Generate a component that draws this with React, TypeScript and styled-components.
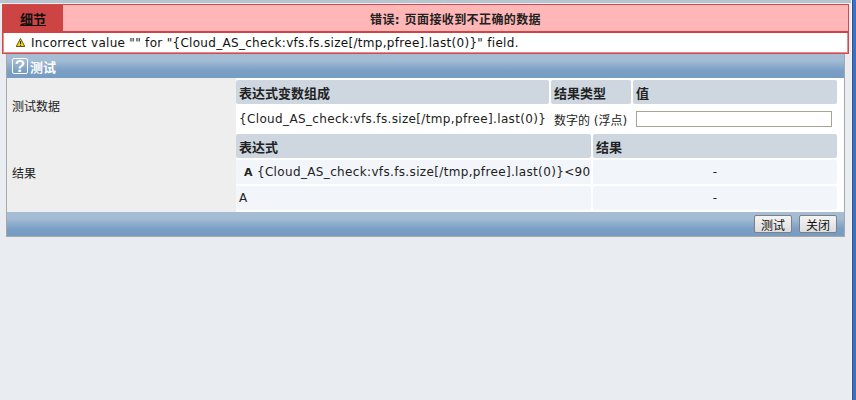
import React from 'react'
import styled, {createGlobalStyle} from 'styled-components'

const GlobalStyle = createGlobalStyle`
  html, body {
    margin: 0;
    padding: 0;
    height: 100%;
    background-color: #e9edf2;
    overflow: hidden;
  }
  body {
    font-family: "DejaVu Sans", "Noto Sans CJK SC", sans-serif;
    font-size: 11px;
    color: #222;
  }
`

const Page = styled.div`
  width: 856px;
  height: 400px;
  display: flex;
`
const Main = styled.div`
  flex: 1;
  min-width: 0;
  box-sizing: border-box;
  border-top: 3px solid #b8c4d0;
  padding: 1px 0 0 2px;
`
const EdgeLight = styled.div`
  width: 1px;
  flex-shrink: 0;
  background-color: #f6f7f9;
`
const EdgeDark = styled.div`
  width: 4px;
  flex-shrink: 0;
  box-sizing: border-box;
  border-left: 1px solid #2f5590;
  background-color: #3f70c2;
`
const ErrorBox = styled.div`
  width: 847px;
  box-sizing: border-box;
  border: 1px solid #d04a4a;
  background-color: #ffb6b6;
`
const ErrorHead = styled.div`
  height: 28px;
  box-sizing: border-box;
  display: flex;
  border-bottom: 2px solid #cc4444;
`
const Details = styled.div`
  width: 60px;
  background-color: #cc4444;
  color: #111;
  font-weight: bold;
  font-size: 13px;
  text-decoration: underline;
  display: flex;
  align-items: center;
  justify-content: center;
`
const ErrorTitle = styled.div`
  flex: 1;
  font-weight: bold;
  font-size: 12px;
  letter-spacing: 0.4px;
  display: flex;
  align-items: center;
  justify-content: center;
`
const ErrorBody = styled.div`
  height: 20px;
  box-sizing: border-box;
  border: 1px solid #f08a8a;
  border-top: none;
  background-color: #fff;
  display: flex;
  align-items: center;
  gap: 6px;
  padding-left: 12px;
  font-size: 12px;
  letter-spacing: 0.3px;
  color: #111;
`
const Form = styled.div`
  width: 839px;
  margin-left: 4px;
  box-sizing: border-box;
  border: 1px solid #a8a8a8;
  border-top: none;
  background-color: #fff;
`
const Bar = styled.div`
  height: 24px;
  background: linear-gradient(#a4bdd4 0%, #a4bdd4 25%, #7a9fc4 70%, #769cc2 100%);
  display: flex;
  align-items: center;
`
const FormTitle = styled(Bar)`
  color: #fff;
  font-weight: bold;
  font-size: 13px;
  padding-left: 5px;
`
const FormFoot = styled(Bar)`
  justify-content: flex-end;
  gap: 7px;
  padding-right: 7px;
`
const HelpIcon = styled.span`
  width: 16px;
  height: 16px;
  margin-right: 2px;
  box-sizing: border-box;
  border: 1px solid #fff;
  border-radius: 2px;
  font-family: "Liberation Sans", sans-serif;
  font-size: 17px;
  font-weight: bold;
  line-height: 15px;
  text-align: center;
  color: #fff;
`
const Row = styled.div`
  display: flex;
`
const Label = styled.div`
  width: 229px;
  background-color: #eeeeee;
  display: flex;
  align-items: center;
  padding-left: 5px;
  box-sizing: border-box;
  font-size: 12px;
`
const Content = styled.div<{$closing?: boolean}>`
  flex: 1;
  padding: 2px 0 ${props => (props.$closing ? '2px' : '0')};
  background-color: #fff;
`
const Table = styled.div<{$columns: string}>`
  display: grid;
  grid-template-columns: ${props => props.$columns};
  gap: 2px 2px;
  width: 601px;
`
const Head = styled.div`
  height: 24px;
  background-color: #ced7e0;
  border-radius: 2px;
  font-weight: bold;
  font-size: 13px;
  display: flex;
  align-items: center;
  padding-left: 3px;
`
const Cell = styled.div<{$tint?: boolean; $center?: boolean}>`
  height: ${props => (props.$tint ? '24px' : '26px')};
  background-color: ${props => (props.$tint ? '#f2f5fa' : '#fff')};
  border-radius: 2px;
  font-size: 12px;
  letter-spacing: 0.35px;
  white-space: nowrap;
  display: flex;
  align-items: center;
  justify-content: ${props => (props.$center ? 'center' : 'flex-start')};
  padding-left: ${props => (props.$center ? '0' : '3px')};
`
const TypeCell = styled(Cell)`
  letter-spacing: 0;
`
const Letter = styled.b`
  margin: 0 4px 0 5px;
  font-size: 11px;
`
const ValueInput = styled.input`
  width: 196px;
  height: 16px;
  box-sizing: border-box;
  border: 1px solid #a8a490;
  background-color: #fff;
  margin-left: 0;
  padding: 0;
`
const Button = styled.button`
  width: 38px;
  height: 18px;
  padding: 0;
  box-sizing: border-box;
  border: 1px solid #808080;
  border-radius: 2px;
  background: linear-gradient(#f4f4f4, #dcdcdc);
  color: #111;
  font-family: inherit;
  font-size: 12px;
`

const WarnIcon = () => (
    <svg width="9" height="9" viewBox="0 0 9 9">
        <path d="M4.5 0.5 L8.8 8.5 H0.2 Z" fill="#f5d800" stroke="#3a3000" strokeWidth="0.8"/>
        <rect x="4" y="3" width="1" height="3" fill="#222"/>
        <rect x="4" y="6.8" width="1" height="1" fill="#222"/>
    </svg>
)

export default function App() {
    return (
        <Page>
            <GlobalStyle/>
            <Main>
                <ErrorBox>
                    <ErrorHead>
                        <Details>细节</Details>
                        <ErrorTitle>错误: 页面接收到不正确的数据</ErrorTitle>
                    </ErrorHead>
                    <ErrorBody>
                        <WarnIcon/>
                        Incorrect value "" for "{'{'}Cloud_AS_check:vfs.fs.size[/tmp,pfree].last(0){'}'}" field.
                    </ErrorBody>
                </ErrorBox>
                <Form>
                    <FormTitle><HelpIcon>?</HelpIcon>测试</FormTitle>
                    <Row>
                        <Label>测试数据</Label>
                        <Content>
                            <Table $columns="313px 80px 204px">
                                <Head>表达式变数组成</Head>
                                <Head>结果类型</Head>
                                <Head>值</Head>
                                <Cell>{'{'}Cloud_AS_check:vfs.fs.size[/tmp,pfree].last(0){'}'}</Cell>
                                <TypeCell>数字的 (浮点)</TypeCell>
                                <Cell><ValueInput/></Cell>
                            </Table>
                        </Content>
                    </Row>
                    <Row>
                        <Label>结果</Label>
                        <Content $closing>
                            <Table $columns="355px 244px">
                                <Head>表达式</Head>
                                <Head>结果</Head>
                                <Cell $tint><Letter>A</Letter>{'{'}Cloud_AS_check:vfs.fs.size[/tmp,pfree].last(0){'}'}&lt;90</Cell>
                                <Cell $tint $center>-</Cell>
                                <Cell $tint>A</Cell>
                                <Cell $tint $center>-</Cell>
                            </Table>
                        </Content>
                    </Row>
                    <FormFoot>
                        <Button>测试</Button>
                        <Button>关闭</Button>
                    </FormFoot>
                </Form>
            </Main>
            <EdgeLight/>
            <EdgeDark/>
        </Page>
    )
}
